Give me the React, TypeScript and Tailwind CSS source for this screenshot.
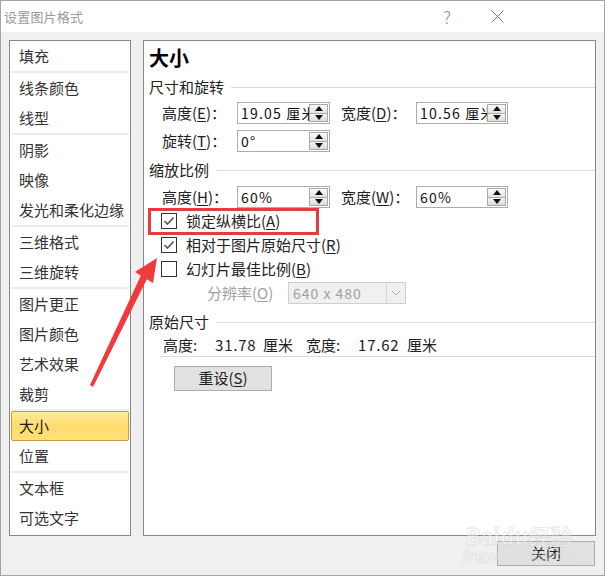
import { Fragment, JSX } from 'react';

const navGroups: string[][] = [
  ['填充'],
  ['线条颜色', '线型'],
  ['阴影', '映像', '发光和柔化边缘'],
  ['三维格式', '三维旋转'],
  ['图片更正', '图片颜色', '艺术效果', '裁剪'],
  ['大小', '位置'],
  ['文本框', '可选文字'],
];

const selected = '大小';

const Key = ({ k }: { k: string }) => <span className="underline underline-offset-2">{k}</span>;

const Spinner = () => (
  <div className="w-[19px] h-full flex flex-col">
    <div className="flex-1 flex items-center justify-center border border-[#a9a9a9] bg-linear-to-b from-[#fafafa] to-[#e2e2e2]">
      <svg width="8" height="5" viewBox="0 0 8 5">
        <polygon points="4,0 8,5 0,5" fill="#111" />
      </svg>
    </div>
    <div className="flex-1 flex items-center justify-center border border-t-0 border-[#a9a9a9] bg-linear-to-b from-[#f4f4f4] to-[#dcdcdc]">
      <svg width="8" height="5" viewBox="0 0 8 5">
        <polygon points="0,0 8,0 4,5" fill="#111" />
      </svg>
    </div>
  </div>
);

const SpinInput = ({ value, width }: { value: string; width: string }) => (
  <div className={`${width} h-[22px] border border-[#abadb3] bg-white flex items-stretch p-[1px]`}>
    <div className="flex-1 min-w-0 overflow-hidden whitespace-nowrap pl-[2px] flex items-center text-[14px] text-[#111] tracking-[1.2px]">
      {value}
    </div>
    <Spinner />
  </div>
);

const SectionHeader = ({ title }: { title: string }) => (
  <div className="h-[20px] flex items-center pl-[5px] gap-[7px]">
    <span className="text-[15px] leading-[20px] text-[#222]">{title}</span>
    <div className="flex-1 h-px bg-[#dcdcdc]" />
  </div>
);

const Label = ({ text, k, w = 'w-[75px]' }: { text: string; k: string; w?: string }) => (
  <span className={`${w} text-[15px] text-[#222] whitespace-nowrap`}>
    {text}(<Key k={k} />)：
  </span>
);

const CheckRow = ({ checked, text, k }: { checked: boolean; text: string; k: string }) => (
  <div className="h-[24px] flex items-center pl-[17px] gap-[9px]">
    <div className="w-[16px] h-[16px] border border-[#333] bg-white flex items-center justify-center">
      {checked && (
        <svg width="12" height="10" viewBox="0 0 12 10">
          <polyline points="1.5,5 4.5,8 10.5,1.5" fill="none" stroke="#555" strokeWidth="1.6" />
        </svg>
      )}
    </div>
    <span className="text-[15px] text-[#222] whitespace-nowrap">
      {text}(<Key k={k} />)
    </span>
  </div>
);

const App = (): JSX.Element => {
  return (
    <div className="relative w-[605px] h-[576px] flex flex-col border border-[#a5a5a5] bg-[#f0f0f0] overflow-hidden font-['Noto_Sans_CJK_SC',sans-serif]">
      {/* title bar */}
      <div className="h-[31px] bg-white flex items-center pl-[3px] pr-[100px]">
        <span className="text-[13px] text-[#9a9a9a] tracking-[0.2px]">设置图片格式</span>
        <span className="ml-auto text-[17px] text-[#8a8a8a] font-light">?</span>
        <svg className="ml-[40px]" width="13" height="13" viewBox="0 0 13 13">
          <line x1="0.5" y1="0.5" x2="12.5" y2="12.5" stroke="#777" strokeWidth="1" />
          <line x1="12.5" y1="0.5" x2="0.5" y2="12.5" stroke="#777" strokeWidth="1" />
        </svg>
      </div>

      {/* body */}
      <div className="flex-1 flex flex-col px-[8px] pt-[8px]">
        <div className="flex gap-[12px] h-[496px]">
          {/* nav list */}
          <div className="w-[122px] border border-[#828790] bg-white flex flex-col">
            {navGroups.map((group, i) => (
              <Fragment key={i}>
                {i > 0 && <div className="h-[2px] mx-[1px] bg-[#ececf1]" />}
                {group.map((item) =>
                  item === selected ? (
                    <div
                      key={item}
                      className="h-[30px] mx-[1px] rounded-[2px] border border-[#c79c3e] bg-linear-to-b from-[#ffeaa0] via-[#ffdc6c] to-[#ffe07a] flex items-center pl-[7px] text-[15px] text-[#222]"
                    >
                      {item}
                    </div>
                  ) : (
                    <div key={item} className="h-[30px] flex items-center pl-[9px] text-[15px] text-[#333]">
                      {item}
                    </div>
                  ),
                )}
              </Fragment>
            ))}
          </div>

          {/* size panel */}
          <div className="w-[453px] border border-[#828790] bg-white flex flex-col">
            <div className="mt-[3px] pl-[5px] h-[28px] flex items-center text-[20px] font-bold text-black">大小</div>

            <div className="mt-[5px]">
              <SectionHeader title="尺寸和旋转" />
            </div>
            <div className="mt-[5px] h-[22px] flex items-center pl-[18px]">
              <Label text="高度" k="E" />
              <SpinInput value="19.05 厘米" width="w-[93px]" />
              <span className="ml-[11px]" />
              <Label text="宽度" k="D" />
              <SpinInput value="10.56 厘米" width="w-[92px]" />
            </div>
            <div className="mt-[6px] h-[22px] flex items-center pl-[18px]">
              <Label text="旋转" k="T" />
              <SpinInput value="0°" width="w-[93px]" />
            </div>

            <div className="mt-[8px]">
              <SectionHeader title="缩放比例" />
            </div>
            <div className="mt-[6px] h-[22px] flex items-center pl-[18px]">
              <Label text="高度" k="H" />
              <SpinInput value="60%" width="w-[93px]" />
              <span className="ml-[11px]" />
              <Label text="宽度" k="W" />
              <SpinInput value="60%" width="w-[92px]" />
            </div>
            <div className="mt-[1px]">
              <CheckRow checked text="锁定纵横比" k="A" />
              <CheckRow checked text="相对于图片原始尺寸" k="R" />
              <CheckRow checked={false} text="幻灯片最佳比例" k="B" />
            </div>
            <div className="mt-[1px] h-[22px] flex items-center pl-[63px]">
              <span className="w-[81px] text-[15px] text-[#a0a0a0] whitespace-nowrap">
                分辨率(<Key k="O" />)
              </span>
              <div className="w-[118px] h-[22px] border border-[#cfcfcf] bg-[#f0f0f0] flex items-stretch">
                <span className="flex-1 flex items-center pl-[4px] text-[14px] text-[#a0a0a0] tracking-[1px]">640 x 480</span>
                <div className="w-[19px] border-l border-[#d6d6d6] flex items-center justify-center">
                  <svg width="10" height="6" viewBox="0 0 10 6">
                    <polyline points="1,1 5,5 9,1" fill="none" stroke="#b0b0b0" strokeWidth="1" />
                  </svg>
                </div>
              </div>
            </div>

            <div className="mt-[8px]">
              <SectionHeader title="原始尺寸" />
            </div>
            <div className="mt-[4px] h-[18px] flex items-center pl-[19px] text-[15px] text-[#222] whitespace-nowrap">
              <span className="w-[52px]">高度:</span>
              <span className="w-[48px] tracking-[0.8px]">31.78</span>
              <span className="w-[43px]">厘米</span>
              <span className="w-[52px]">宽度:</span>
              <span className="w-[49px] tracking-[0.8px]">17.62</span>
              <span>厘米</span>
            </div>
            <div className="mt-[2px] ml-[16px] h-px bg-[#dcdcdc]" />
            <div className="mt-[9px] ml-[30px] w-[98px] h-[25px] border border-[#adadad] bg-[#e1e1e1] flex items-center justify-center text-[15px] text-[#222]">
              重设(<Key k="S" />)
            </div>
          </div>
        </div>

        {/* footer */}
        <div className="mt-[5px] flex">
          <div className="ml-auto mr-[1px] w-[98px] h-[25px] border border-[#adadad] bg-[#e1e1e1] flex items-center justify-center text-[15px] text-[#222]">
            关闭
          </div>
        </div>
      </div>

      {/* annotation: red highlight box */}
      <div className="absolute left-[147px] top-[207px] w-[171px] h-[27px] border-[3px] border-[#ea3a3e] pointer-events-none" />

      {/* annotation: red arrow */}
      <svg className="absolute left-0 top-0 pointer-events-none" width="605" height="576" viewBox="0 0 605 576">
        <polygon points="89,384 92,386 147,276 141,272" fill="#f03a3c" />
        <polygon points="156,257 134,271 152,282" fill="#f03a3c" />
      </svg>

      {/* watermark */}
      <div className="absolute left-[463px] top-[522px] w-[110px] flex flex-col items-center pointer-events-none opacity-60">
        <span className="text-[22px] leading-[24px] font-bold text-white/70 [-webkit-text-stroke:0.8px_#d4d4d4]">Baidu经验</span>
        <span className="text-[13px] leading-[16px] text-white/70 [-webkit-text-stroke:0.5px_#d4d4d4]">jingyan.baidu.com</span>
      </div>
    </div>
  );
};

export default App;
